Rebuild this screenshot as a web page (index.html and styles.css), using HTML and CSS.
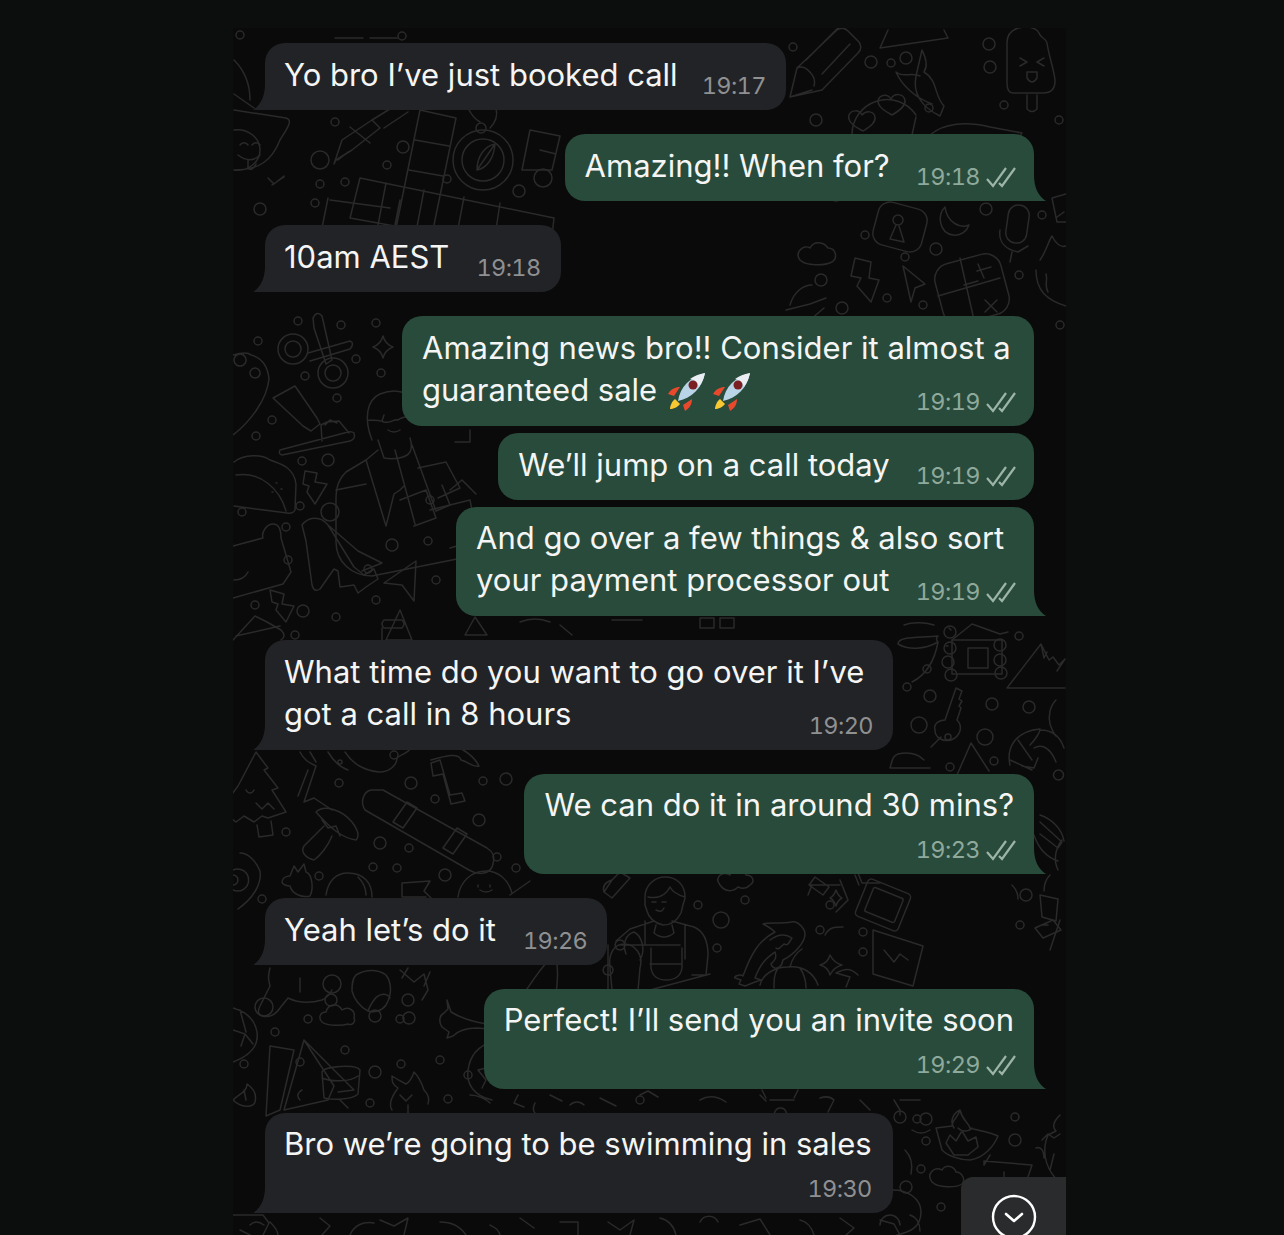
FILE: index.html
```html
<!DOCTYPE html>
<html lang="en">
<head>
  <meta charset="UTF-8">
  <title>Chat</title>
  <link rel="stylesheet" href="styles.css">
</head>
<body>
  <svg width="0" height="0" class="defs">
    <defs>
      <symbol id="ticks" viewBox="0 0 30 22">
        <path d="M1 13l6 7L20 2M13 17l3 3L29 2" fill="none" stroke="currentColor" stroke-width="2.2"/>
      </symbol>
      <symbol id="rocket" viewBox="0 0 40 40">
        <path d="M8 24L2 22c3-5 7-7 12-7zM17 33l2 6c5-3 7-7 7-12z" fill="#e8492c"/>
        <path d="M9 27c-3 2-5 7-5 10 3 0 8-2 10-5z" fill="#f7c832"/>
        <path d="M12 29C14 15 24 5 39 1c-3 15-13 25-27 28z" fill="#b9d4e6"/>
        <path d="M39 1c-6 1-11 3-15 6 4 0 8 4 9 8 3-4 5-9 6-14z" fill="#e9eef2"/>
        <circle cx="27" cy="13" r="4.5" fill="#7a1f22"/>
      </symbol>
    </defs>
  </svg>

  <main class="chat">
    <!-- wallpaper, coordinates are page pixels -->
    <svg class="doodles" viewBox="233 28 833 1207" width="833" height="1207">
      <g fill="none" stroke="#2a2a2a" stroke-width="1.5" stroke-linejoin="round" stroke-linecap="round">
        <!-- top row -->
        <path d="M335 38h28M370 38h28"/><circle cx="402" cy="36" r="4"/><circle cx="240" cy="35" r="4"/>
        <path d="M234 60c10 10 16 24 16 40M234 94l20 14"/>
        <!-- pencil, triangle ruler, chili, popsicle -->
        <path d="M790 97l7-29 40-38q6-4 11 1l11 11q4 6-1 11l-36 37zM797 68c8-4 20 8 17 18M790 97l22-7M806 60l34-34M822 74l28-30"/>
        <path d="M880 48l68-10-4-8M880 48l8-18"/>
        <path d="M922 50c4 8 6 16 2 22 14 8 10 24 20 34l-4 10c-16-8-28-20-24-40zM920 76c-8-4-18 2-24-4 6 14 20 26 36 32"/>
        <path d="M1007 43q0-15 18-16c8 0 12 2 14 6 2 6 6 4 8 10 2 14 8 30 8 38q0 12-12 12h-30q-6 0-6-10zM1027 95v14q5 5 10 0V95M1020 58l7 4-7 4M1044 58l-7 4 7 4M1027 72h10v6q-5 8-10 0z"/>
        <circle cx="793" cy="47" r="4"/><circle cx="871" cy="62" r="6"/><circle cx="906" cy="58" r="6"/><circle cx="891" cy="63" r="4"/>
        <circle cx="989" cy="44" r="6"/><circle cx="990" cy="67" r="6"/><circle cx="1059" cy="120" r="4"/><circle cx="1004" cy="105" r="4"/><circle cx="929" cy="108" r="4"/>
        <circle cx="816" cy="120" r="6"/>
        <!-- heart eyes -->
        <path d="M852 135a35 35 0 0 1 64-20M912 135l4-18"/>
        <path d="M863 131c-8-4-16-10-14-16 2-5 10-6 13 0 4-5 12-4 13 2 1 6-6 10-12 14zM892 115c-7-4-14-8-14-14 1-6 9-8 13-2 3-6 12-6 14 1 1 6-6 11-13 15z"/>
        <path d="M930 135c14-12 36-14 60-8l32 6-8 14"/>
        <!-- lock, moon, mic, cloud -->
        <rect x="875" y="205" width="50" height="44" rx="12" transform="rotate(15 900 227)"/>
        <circle cx="898" cy="220" r="5"/><path d="M896 225l-6 14 14 3-5-16"/>
        <path d="M945 207c-8 8-6 26 8 28 8 1 14-4 16-10-8 4-22-2-24-18z"/>
        <rect x="1007" y="205" width="21" height="38" rx="10" transform="rotate(8 1017 224)"/>
        <path d="M1000 230c-2 14 8 20 18 22l10-6M1012 252l-2 10"/>
        <path d="M800 260c-6-8 4-16 10-12 4-8 14-6 18 0 8 0 10 10 4 14-8 4-26 4-32-2z"/>
        <circle cx="986" cy="209" r="6"/><circle cx="1042" cy="215" r="4"/><circle cx="836" cy="195" r="6"/><circle cx="865" cy="235" r="4"/>
        <circle cx="936" cy="249" r="6"/><circle cx="905" cy="257" r="4"/><circle cx="821" cy="280" r="6"/><circle cx="1019" cy="275" r="4"/>
        <path d="M1052 198l14-4M1052 198l5 24h9M1064 212l-7 5"/>
        <!-- bolt, arrow, calculator, hand -->
        <path d="M855 258l16 4-2 16 10 2-8 22-14-16 4-8-10-2z"/>
        <path d="M903 266l22 18-10 4-4 14z"/>
        <rect x="938" y="258" width="68" height="62" rx="16" transform="rotate(-15 972 289)"/>
        <path d="M960 258l14 62M938 296l62-18M964 285l14-4M978 264l6 14M977 271l14-4M985 300l12 12M997 300l-12 12"/>
        <path d="M790 305c4-14 14-20 22-20M786 310l24-6 16-6M810 320l14-12"/>
        <path d="M1040 260c6-8 8-18 12-24 4 8 8 12 14 10M1036 270c0 20 10 30 30 36M1046 274c2 6-2 12 2 18"/>
        <circle cx="887" cy="298" r="4"/><circle cx="842" cy="308" r="6"/><circle cx="923" cy="305" r="4"/><circle cx="1060" cy="325" r="4"/>
        <!-- pen, compass, crossword -->
        <path d="M334 164l8-24 30-20 8 8-28 22-16 10zM350 127l20 16M372 120l26-16M384 128l24-16M338 160l10-8"/>
        <circle cx="403" cy="147" r="6"/><circle cx="335" cy="122" r="4"/><circle cx="320" cy="160" r="9"/><circle cx="320" cy="184" r="4"/><circle cx="345" cy="182" r="4"/><circle cx="315" cy="203" r="4"/><circle cx="260" cy="209" r="6"/>
        <circle cx="387" cy="165" r="4"/><circle cx="447" cy="179" r="4"/><circle cx="543" cy="178" r="9"/><circle cx="519" cy="191" r="6"/>
        <path d="M420 110l36 8-28 136M420 110l-26 128M415 140l34 6M409 170l34 6M400 200l-8 40"/>
        <path d="M360 178l-10 40 200 36 4-36zM386 183l-8 42M424 190l-8 42M464 197l-8 42M500 203l-6 40M328 198l-8 40 60 12M330 200l60 8"/>
        <circle cx="483" cy="160" r="30"/><circle cx="483" cy="160" r="21"/><circle cx="481" cy="128" r="5"/>
        <path d="M477 170c0-14 8-24 18-26-1 14-8 24-18 26zM477 170l18-26"/>
        <path d="M468 108c4 8 8 12 12 14M490 128c6-6 8-12 6-20"/>
        <path d="M234 110l52 8c8 2 0 12-6 22-8 20-20 30-46 30M234 130c14-2 26 8 26 20s-12 22-26 20"/>
        <path d="M240 145c2-3 6-3 8 0M252 145c2-3 6-3 8 0M238 155c8 6 16 6 22 0M248 160v8q4 4 8-4M272 185l12-8M268 178l6 6 10-8"/>
        <path d="M530 130l30 6-8 34h-30zM540 150l16 4"/>
        <!-- left middle: scissors, tube, toothbrush, taco -->
        <circle cx="293" cy="349" r="15"/><circle cx="293" cy="349" r="8"/><circle cx="333" cy="373" r="15"/><circle cx="333" cy="373" r="8"/>
        <path d="M308 353l42-12q5 2 0 8l-40 12M313 318q4-8 9-2l10 44-6 4-12-36z"/>
        <path d="M383 336q2 8 10 11-8 3-10 11-2-8-10-11 8-3 10-11z"/>
        <circle cx="298" cy="321" r="4"/><circle cx="341" cy="325" r="4"/><circle cx="376" cy="323" r="4"/><circle cx="258" cy="341" r="4"/><circle cx="356" cy="359" r="4"/><circle cx="381" cy="373" r="4"/><circle cx="305" cy="376" r="4"/><circle cx="337" cy="398" r="4"/><circle cx="272" cy="420" r="4"/><circle cx="256" cy="436" r="4"/>
        <circle cx="302" cy="461" r="4"/><circle cx="328" cy="460" r="6"/><circle cx="300" cy="506" r="4"/><circle cx="330" cy="512" r="9"/><circle cx="242" cy="512" r="4"/><circle cx="286" cy="527" r="4"/><circle cx="288" cy="560" r="4"/><circle cx="392" cy="545" r="6"/><circle cx="428" cy="541" r="4"/><circle cx="368" cy="569" r="4"/><circle cx="376" cy="600" r="4"/><circle cx="436" cy="580" r="4"/><circle cx="336" cy="617" r="4"/><circle cx="303" cy="611" r="6"/><circle cx="255" cy="605" r="4"/><circle cx="295" cy="635" r="4"/>
        <path d="M233 355q14-4 18 0 16 4 18 24c-2 20-18 42-36 56M240 354a6 6 0 1 0 .1 0M255 368a5 5 0 1 0 .1 0"/>
        <path d="M273 398l22-12 22 32 3 6-9 7-8-5z"/>
        <path d="M280 450q-2 4 2 5l68-14q6-2 4-8-2-2-6-1zM322 441l-1-16 6-3 12-1 10 12M325 425l5-5 7 3"/>
        <path d="M234 462c10-8 28-8 36-2 12 4 24 8 26 24l-1 26q-2 4-8 3l-53-7M236 475c24-4 44 14 50 36M276 483h1M272 492h1M281 489h1"/>
        <path d="M305 471l12 2-2 9 12 2-12 20-8-12 2-6-6-2z"/>
        <path d="M233 546l30-8c-2-6 4-14 10-14 6 0 8 6 8 14l10 34-8 12-50 14M234 580c8 0 12-4 14-8"/>
        <path d="M270 590l14 4-2 10 12 2-8 16-10-12 2-6-6-2z"/>
        <path d="M302 525c6-8 18-10 26 0l26 42 10 8 10-6 4 10-12 8-8 6-4-8-14 2-2-16-4-2-14 20q-6 4-8-4l-6-44zM328 525l30 26 24 12-20 8"/>
        <path d="M416 561l-32 22 18 2 12 16z"/>
        <path d="M233 640l22-24 12 6 14 8q6 6 0 10M236 636l44-10M400 610l-14 30h26zM382 628v12M384 620h18q4 4 0 8h-18q-4-4 0-8z"/>
        <!-- person with glasses -->
        <path d="M372 440c-8-20-6-40 8-46 20-8 36 0 40 22M384 415l-2 6M368 420c8 0 12 0 16 2 8 2 10-4 14-2 4-4 16-4 20-6M388 430q6 4 12 0"/>
        <path d="M378 440l6 18c10 2 22 0 26-6 2-4 2-8 0-14M378 450l-12 10-20 12c-8 8-10 16-10 28v42c0 20 16 34 36 34l100-20M336 490l30-6M366 460l20 66 8-32 6-4 4-4M395 450l20 74M412 445l24 66 14-6-8-20M418 468l28-6 14 26-22 10M400 500l26-10 10 28-22 8"/>
        <path d="M450 490l12-10 14 14M430 510l40-10 8 40-28 8"/>
        <!-- strip between the bubbles -->
        <path d="M455 442h15v-12M612 620h30M700 618h14v10h-14zM720 618h14v10h-14zM475 617l-10 18h22zM520 622c10-4 20-4 30 0M560 625l12 10"/>
        <circle cx="430" cy="500" r="4"/>
        <!-- cabin, mountain, key, shrimp -->
        <path d="M898 644c0-8 22-6 40-8-2 2-2 4 0 6-4 22-14 34-26 40M898 644c10 6 26 6 40-2M904 625c10-4 24-2 30 0"/>
        <path d="M952 640l20-16 28 10 8-2M948 646h-2M951 630l-2-2"/>
        <circle cx="950" cy="632" r="6"/><circle cx="1019" cy="636" r="4"/><circle cx="927" cy="669" r="4"/><circle cx="907" cy="687" r="4"/><circle cx="930" cy="696" r="6"/><circle cx="919" cy="725" r="8"/><circle cx="992" cy="704" r="6"/><circle cx="1029" cy="707" r="6"/><circle cx="985" cy="737" r="8"/><circle cx="950" cy="767" r="4"/><circle cx="994" cy="761" r="4"/>
        <path d="M952 640h50v34h-50zM968 648h20v20h-20z"/>
        <circle cx="950" cy="648" r="6"/><circle cx="948" cy="662" r="6"/><circle cx="951" cy="675" r="6"/><circle cx="1000" cy="645" r="6"/><circle cx="1000" cy="660" r="6"/><circle cx="1001" cy="673" r="6"/>
        <path d="M1007 688l34-44 8 16 4-3 6 8 6-6-8 12M1007 688h58M1041 644l3 14 3-6"/>
        <path d="M1056 700c-6 6-8 16-6 24 2 6 4 10 6 12"/>
        <path d="M945 720l11-32 6 3-3 8 3 2-3 5 2 2-4 12c6 6 4 16-6 20-8 2-16-2-16-10-2-6 4-10 10-10zM941 737l-10 10"/>
        <circle cx="948" cy="737" r="3"/>
        <path d="M924 760c-6-6-16-8-26-6-6 2-6 8-8 14h40M965 775l-8 0 14-32 18 28"/>
        <path d="M1040 730c12 0 20 6 24 18M1010 765c-4-18 6-34 30-36 0 4-6 12-10 16M1018 740l14 20M1010 760l22 10M1034 748c6-4 16-2 22 14M1038 758l-4 10-12-2M1012 775l10 20 6-10M1058 770a5 5 0 1 0 1 0"/>
        <path d="M1040 815c12 4 22 14 24 26M1040 822l22 20-4 6-18-14M1034 835c4 12 12 22 24 26M1058 870c-4-8-4-20 4-30"/>
        <!-- bottom left: tree, hammer, snowboard, mushroom -->
        <path d="M256 752l12 16-4 2 14 18-6 2 14 22-18 6-6-2-8 6-10-6-8 6-8-6-12 4M256 752l-18 34-6 8M257 825l2 12 14-2-2-14M246 790c2 4 6 4 8 0M256 803l6 6 6-6 6 6"/>
        <path d="M300 752c4 8 8 10 16 14l-12 36 10-4 18 12M308 770l-10 26M310 752l6 10M328 752c6 10 14 16 20 18"/>
        <path d="M345 752c8 12 18 18 34 20 12 0 18-8 18-14 4-4 10-4 14-10s8-6 14-6"/>
        <circle cx="340" cy="762" r="2"/><circle cx="394" cy="755" r="4"/><circle cx="339" cy="783" r="4"/><circle cx="411" cy="783" r="6"/><circle cx="435" cy="799" r="4"/><circle cx="483" cy="781" r="4"/><circle cx="506" cy="779" r="6"/><circle cx="479" cy="820" r="6"/><circle cx="286" cy="832" r="4"/><circle cx="380" cy="843" r="6"/><circle cx="409" cy="848" r="4"/><circle cx="497" cy="857" r="4"/><circle cx="516" cy="868" r="4"/><circle cx="373" cy="867" r="4"/><circle cx="397" cy="868" r="4"/><circle cx="445" cy="875" r="6"/><circle cx="262" cy="899" r="4"/><circle cx="319" cy="876" r="4"/>
        <path d="M431 763l9-3 10 35 12-2 3 8-14 3-8-30-10 2-2-13zM431 760c14-4 28-8 30 0 8 2 12 8 18 6-6-12-24-24-40-22"/>
        <path d="M371 790c-8 2-11 12-6 20l104 60c10 6 22 4 24-6 2-8 0-12-6-16l-104-58zM393 822l14-20 10 6-14 20zM443 848l14-20 10 6-14 20z"/>
        <path d="M316 812c8-8 26-2 36 10 6 8 8 14 4 18-14-2-26-12-40-28zM324 826l-20 20c-4 6 2 12 10 14 6-4 14-14 18-24M322 820l6 8 8-2 4 10"/>
        <path d="M240 853c8 0 16 8 20 18 2 14-8 28-22 38M233 870a11 11 0 1 1 0 20M233 875a5 5 0 1 1 0 10"/>
        <path d="M282 882c0-4 4-6 8-6l4-10 4 6 6-8 2 8c6 2 8 16 4 24-8 2-18-2-20-10-4 0-8-2-8-4z"/>
        <path d="M326 895c2-14 10-22 22-22 16 0 24 10 24 24M358 877c4 4 8 10 8 18"/>
        <path d="M402 897v-14l28-2-6 10 8 8M402 897h24"/>
        <path d="M458 897c2-16 14-26 28-26 12 0 22 8 26 22M478 885v2M490 885v2M480 890q6 4 12 0"/>
        <path d="M510 895l20-14"/>
        <!-- man with apron, cactus, koi, pumpkin -->
        <path d="M645 897c0-12 10-20 20-20 12 0 20 8 20 20 0 4-2 6-2 8l-2 8c-4 8-10 12-18 12-8-2-14-6-16-14l-2-6zM648 897c10 2 18-2 22-10 2 4 8 8 15 10"/>
        <path d="M652 902h4M662 902h4M656 910c4 2 6 2 8-2"/>
        <path d="M656 925l-2 8q10 8 20 0l-2-8M654 921l-24 8-14 12M672 921l22 6q14 6 14 28l-2 20h-14M645 921v24h-24M685 925v34M640 945h40M651 948v20q2 12 15 12 14 0 16-12v-20M650 964h32M650 990l60-16M608 945v50"/>
        <path d="M640 960c6-10 2-24-6-28-8 2-12 12-8 22M612 990l-2-22c-2-14 4-24 14-24s20 10 16 24l-2 22M600 990h34l-4 14M620 940a5 5 0 1 0 .1 0M608 965a5 5 0 1 0 .1 0"/>
        <path d="M720 885c-6-8 2-14 10-10 2-8 14-8 16 0 6 0 10 6 4 10-4 4-8 4-12 2-6 6-14 4-18-2z"/>
        <path d="M612 880l8-8 10 6-18 20-8-6zM604 892c-2-6 2-10 8-12"/>
        <circle cx="698" cy="905" r="4"/><circle cx="745" cy="900" r="4"/><circle cx="721" cy="920" r="8"/><circle cx="717" cy="948" r="4"/><circle cx="830" cy="905" r="4"/><circle cx="820" cy="930" r="4"/><circle cx="863" cy="932" r="4"/><circle cx="863" cy="952" r="4"/>
        <path d="M735 978c-2-2 6-4 8-2 8-22 16-36 32-44-4-4-8-6-12-8 6-2 18 0 28-2 8-2 14 8 14 12 0 8-10 20-22 26-2 10-10 10-12 4 4-4 6-6 4-12-8 6-14 10-20 26l6 2-6 2-10 4-6-2 2-4zM770 940c8-6 16-6 22-2-4 6-4 8-8 6-4 4-6 6-8 4"/>
        <path d="M760 985c2-10 14-18 28-18 14-2 26 6 30 18M790 967c2-8 6-14 12-18M778 968c-4 6-4 12-4 20M800 968c4 6 6 12 6 20"/>
        <path d="M815 877l14 10-6 8-14-10zM812 885l-4 10M840 880l8 20 -12 12M810 885h30M855 875l4 10M825 935c4-8 10-8 18-8M858 975c-8-8-14-6-22-2l14 4-4 10"/>
        <path d="M836 890q2 6 6 8-4 2-6 8-2-6-6-8 4-2 6-8zM830 955q4 8 12 10-8 2-12 10-2-8-10-10 8-2 10-10z"/>
        <rect x="860" y="885" width="46" height="40" rx="4" transform="rotate(22 883 905)"/>
        <rect x="868" y="892" width="32" height="26" rx="2" transform="rotate(22 884 905)"/>
        <path d="M880 883h-18l-4-10M873 930l50 16-10 40-40-12zM884 950l10 12 6-8 8 6"/>
        <path d="M1040 895l18 4-2 22-14-4zM1050 875c-4 4-6 10-6 16M1060 920l-10 30"/>
        <path d="M1035 928l18-8 8 10-18 8zM1042 925h6M1012 885c4 4 6 8 6 14"/>
        <circle cx="1026" cy="895" r="6"/><circle cx="1020" cy="925" r="4"/>
        <!-- bottom: whale, cup, tent, fox, globe, diya -->
        <path d="M270 968c-2 8-2 10 0 18l-10 20q-4 8 2 10c8 2 14-2 18-8l8-10c8 4 20 6 34 2 4-2 8-6 10-10M300 978v14"/>
        <path d="M356 975c10-6 22-6 30 0 6 8 6 20 0 30-4 6-12 8-18 6-8-4-14-12-16-20 0-6 0-12 4-16zM374 1000c4-6 12-8 16-2M368 1011c2-6 4-8 6-11"/>
        <path d="M400 970l14 12 10-8 4 16-6 10M408 968l-6 10M430 972l-6 14"/>
        <path d="M442 1027c-4-6-2-12 2-14l4-4-1-9 4 12c10 6 22 10 36 12 14-2 22-8 28-16 10-16 18-30 32-46 4-4 8-4 10 2 2 20-2 46-18 72-2 2-4 2-4-4l4-28c-8 14-20 24-36 26l-26-2c-8 0-18 2-24 8l-6 2 2-6zM510 1048c2-10 6-18 12-24M516 1022l10-16 8 18"/>
        <circle cx="332" cy="984" r="9"/><circle cx="331" cy="1000" r="6"/><circle cx="264" cy="1007" r="9"/><circle cx="308" cy="1019" r="4"/><circle cx="375" cy="1016" r="6"/><circle cx="408" cy="1000" r="6"/><circle cx="409" cy="1018" r="6"/><circle cx="400" cy="1019" r="4"/><circle cx="275" cy="1032" r="4"/><circle cx="244" cy="1064" r="4"/><circle cx="345" cy="1050" r="4"/><circle cx="300" cy="1062" r="4"/><circle cx="375" cy="1072" r="6"/><circle cx="401" cy="1064" r="4"/><circle cx="440" cy="1060" r="4"/><circle cx="468" cy="1075" r="4"/><circle cx="448" cy="1099" r="4"/><circle cx="370" cy="1103" r="4"/>
        <path d="M233 1008c14 4 22 12 24 24 2 14-8 24-24 30M233 1030l12 4 8 10M245 1034l-4 12M240 1010l6 22"/>
        <path d="M322 1022c-4-4-2-10 4-10 2-8 12-10 16-2 6-4 14 0 12 8 2 4-2 8-6 6-6 2-22 2-26-2z"/>
        <path d="M270 1046l24 4-14 60-14 6zM304 1040l-20 70 44-10 6-14zM304 1040l50 50-16 2M322 1072c2-6 34-8 38-2l-2 24c-6 6-26 6-34 4zM322 1078c10 4 28 4 36-2"/>
        <path d="M392 1110c-4-6 0-14 6-22-6-4-6-6-6-12 6 4 10 6 14 8 4-2 6-6 8-12 6 6 8 12 10 18 4 4 6 8 4 14M400 1095l6 6 6-6M408 1105v8"/>
        <path d="M492 1042c-14 4-22 14-24 28s6 26 24 30M478 1070l16-4 4 10 8 4M478 1070l8 10-4 8"/>
        <path d="M233 1100c6-6 14-8 14-16 6 4 10 10 8 18-2 6-14 6-22-2zM244 1090l2 10"/>
        <path d="M535 1103c-2 4-2 8 0 10M550 1095l12 6M470 1095c8 0 16 4 20 8M518 1095l-4 8 10 4M340 1100l8 8"/>
        <path d="M960 1110c-2 8-8 10-8 16l-16 2 6 22c6 6 18 10 28 10 14-2 24-14 28-24-8-4-22-6-28-8-2-6-8-8-10-18zM960 1110c-8 4-10 12-6 18M958 1128c4 4 10 4 14 0M946 1143l4-8 6 6 6-10 6 10 8-4 2 10-10 8-14 0z"/>
        <circle cx="900" cy="1117" r="6"/><circle cx="917" cy="1119" r="4"/><circle cx="926" cy="1119" r="6"/><circle cx="1015" cy="1117" r="4"/><circle cx="1015" cy="1140" r="6"/><circle cx="926" cy="1141" r="4"/><circle cx="921" cy="1169" r="4"/><circle cx="906" cy="1187" r="6"/><circle cx="941" cy="1207" r="4"/>
        <path d="M932 1182c-6-8 2-16 10-12 4-6 12-4 14 2 6 0 10 8 6 12-6 4-24 4-30-2zM984 1165l0-4 48 4-4 12M990 1155l-6 10M1004 1178v-6"/>
        <path d="M1060 1115c-6 6-8 12-4 16l-8 4c-6 14-4 30 8 44M1042 1140l6-6 6 4 6-4M1036 1148c4-2 8 2 8 10M1050 1170l4-16"/>
        <path d="M900 1115v-5l-6-10M905 1150c6 6 8 14 6 24M930 1130c-6 4-12 4-18 0"/>
        <path d="M893 1190c14 0 28 8 28 22 0 16-12 20-24 23M880 1225a10 10 0 0 1 20 0M910 1215c6 2 10 8 10 16"/>
        <path d="M700 1100c10-6 20-2 26 2M760 1095l6 6M640 1095l8-4 10 6M570 1105c4-4 10-4 14 0M600 1098l16 8"/>
        <path d="M780 1108a6 6 0 1 0 1 0M770 1100l24 0M762 1090l4 8M798 1090l-4 8"/>
        <circle cx="640" cy="1100" r="4"/>
        <path d="M300 1100c-4-4-2-8 2-10M820 1098c6-2 10-2 14 2l-6 12M860 1100l10 10M900 1100h20"/>
        <!-- under the last bubbles -->
        <path d="M233 1215h30l6 8-6 12M250 1225q6-6 14 0M270 1222c4 4 8 10 8 13M240 1230l10 5"/>
        <path d="M320 1218l10 8-8 9M380 1220l14 6 14-8-4 17M350 1235c4-10 14-14 24-12M440 1222c12 0 20 4 26 13M490 1225c2 2 8 2 10 10M520 1218l14 10M560 1222h18v13M608 1222l12 8 14-10-4 15M660 1218c8 2 14 8 16 17M700 1222a10 10 0 0 1 18 0M740 1225l20-6 10 16M800 1220c8 2 12 8 14 15M840 1218l14 10-8 7M880 1220l14 4 6 11"/>
      </g>
    </svg>

    <div class="thread">
      <div class="row"><div class="bubble in gap-24">
        <p class="text">Yo bro I’ve just booked call</p>
        <span class="meta">19:17</span>
      </div></div>
      <div class="row out"><div class="bubble out">
        <p class="text">Amazing!! When for?</p>
        <span class="meta">19:18 <svg class="ticks"><use href="#ticks"/></svg></span>
      </div></div>
      <div class="row"><div class="bubble in">
        <p class="text">10am AEST</p>
        <span class="meta">19:18</span>
      </div></div>
      <div class="row out"><div class="bubble out wrap no-tail w-632">
        <p class="text">Amazing news bro!! Consider it almost a<br>guaranteed sale <svg class="rocket"><use href="#rocket"/></svg> <svg class="rocket"><use href="#rocket"/></svg></p>
        <span class="meta">19:19 <svg class="ticks"><use href="#ticks"/></svg></span>
      </div></div>
      <div class="row out tight"><div class="bubble out no-tail">
        <p class="text">We’ll jump on a call today</p>
        <span class="meta">19:19 <svg class="ticks"><use href="#ticks"/></svg></span>
      </div></div>
      <div class="row out tight"><div class="bubble out wrap w-578">
        <p class="text">And go over a few things &amp; also sort<br>your payment processor out</p>
        <span class="meta">19:19 <svg class="ticks"><use href="#ticks"/></svg></span>
      </div></div>
      <div class="row"><div class="bubble in wrap w-628">
        <p class="text">What time do you want to go over it I’ve<br>got a call in 8 hours</p>
        <span class="meta">19:20</span>
      </div></div>
      <div class="row out"><div class="bubble out stack">
        <p class="text">We can do it in around 30 mins?</p>
        <span class="meta">19:23 <svg class="ticks"><use href="#ticks"/></svg></span>
      </div></div>
      <div class="row"><div class="bubble in">
        <p class="text">Yeah let’s do it</p>
        <span class="meta">19:26</span>
      </div></div>
      <div class="row out"><div class="bubble out stack">
        <p class="text">Perfect! I’ll send you an invite soon</p>
        <span class="meta">19:29 <svg class="ticks"><use href="#ticks"/></svg></span>
      </div></div>
      <div class="row"><div class="bubble in stack">
        <p class="text">Bro we’re going to be swimming in sales</p>
        <span class="meta">19:30</span>
      </div></div>
    </div>

    <div class="jump">
      <svg width="46" height="46" viewBox="0 0 46 46"><circle cx="23" cy="23" r="21" fill="none" stroke="#fff" stroke-width="2.4"/><path d="M15 20l8 7 8-7" fill="none" stroke="#fff" stroke-width="2.6" stroke-linecap="round" stroke-linejoin="round"/></svg>
    </div>
  </main>
</body>
</html>
```
FILE: styles.css
```css
html, body {
  margin: 0;
  height: 100%;
}
body {
  background-color: #0c0e0e;
  font-family: Inter, "Liberation Sans", sans-serif;
  overflow: hidden;
}
.defs {
  display: block;
}
.chat {
  position: relative;
  width: 833px;
  height: 1207px;
  margin: 28px 0 0 233px;
  background-color: #0a0a0a;
  overflow: hidden;
}
.doodles {
  position: absolute;
  top: 0;
  left: 0;
}
.thread {
  position: relative;
  display: flex;
  flex-direction: column;
  padding: 15px 32px 0;
}
.row {
  display: flex;
  margin-bottom: 24px;
}
.row.out {
  justify-content: flex-end;
}
.row:has(+ .row.tight) {
  margin-bottom: 7px;
}
.bubble {
  position: relative;
  display: flex;
  align-items: flex-start;
  gap: 27px;
  box-sizing: border-box;
  min-height: 67px;
  padding: 10.5px 20px 9px;
  border-radius: 20px;
  color: #f4f5f4;
}
.bubble.in {
  padding-left: 19px;
  background-color: #222326;
  border-bottom-left-radius: 6px;
}
.bubble.stack,
.bubble.w-578 {
  padding-top: 9.5px;
}
.bubble.in.stack {
  padding-right: 21px;
}
.bubble.out {
  gap: 26px;
  background-color: #284b3b;
  border-bottom-right-radius: 6px;
}
.bubble.no-tail {
  border-bottom-right-radius: 20px;
}
.bubble.gap-24 {
  gap: 24px;
}
/* tails drawn with css so they sit under the corner */
.bubble.in::before,
.bubble.out:not(.no-tail)::after {
  content: "";
  position: absolute;
  bottom: 0;
  width: 22px;
  height: 26px;
}
.bubble.in::before {
  left: -12px;
  background-color: #222326;
  clip-path: path("M12 0C12 12 8 21 0 26H22V0z");
}
.bubble.out:not(.no-tail)::after {
  right: -12px;
  background-color: #284b3b;
  clip-path: path("M10 0C10 12 14 21 22 26H0V0z");
}
.bubble.wrap,
.bubble.stack {
  flex-direction: column;
  align-items: stretch;
  gap: 0;
}
.w-632 { width: 632px; }
.w-578 { width: 578px; }
.w-628 { width: 628px; }
.text {
  margin: 0;
  font-size: 31px;
  line-height: 42.5px;
  white-space: nowrap;
}
.meta {
  display: flex;
  align-self: flex-end;
  align-items: center;
  gap: 6px;
  justify-content: flex-end;
  font-size: 23.5px;
  font-variant-numeric: tabular-nums;
  line-height: 30px;
  letter-spacing: -0.6px;
  color: #8f9092;
}
.bubble.out .meta {
  color: #8fa99b;
  margin-right: -2px;
}
.bubble.wrap .meta {
  margin-top: -24.5px;
}
.bubble.w-578 .meta {
  margin-top: -24.5px;
}
.bubble.stack .meta {
  margin-top: 9px;
}
.ticks {
  width: 30px;
  height: 22px;
  color: #9db5a8;
}
.rocket {
  width: 40px;
  height: 40px;
  margin-block: -6px;
  vertical-align: -5px;
}
.rocket + .rocket {
  margin-left: -4px;
}
.jump {
  position: absolute;
  right: 0;
  bottom: 0;
  display: flex;
  justify-content: center;
  box-sizing: border-box;
  width: 105px;
  height: 58px;
  padding-top: 17px;
  background-color: #2a2b2c;
  border-top-left-radius: 12px;
}
```
